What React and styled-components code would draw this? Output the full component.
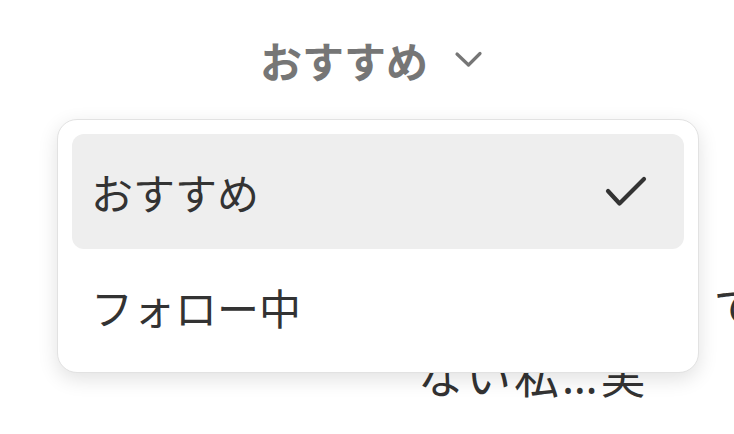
import styled, { createGlobalStyle } from "styled-components";

const GlobalStyle = createGlobalStyle`
  html, body {
    margin: 0;
    padding: 0;
    background: #ffffff;
    overflow: hidden;
  }
  body {
    font-family: "Noto Sans CJK JP", "Noto Sans", sans-serif;
  }
`;

const Page = styled.div`
  position: relative;
  width: 734px;
  height: 434px;
  overflow: hidden;
`;

const Header = styled.div`
  height: 118px;
  padding-left: 10px;
  display: flex;
  align-items: center;
  justify-content: center;
  gap: 26px;
  color: #767676;
  font-size: 42px;
  font-weight: 700;
`;

const Feed = styled.div`
  margin-top: 154px;
  padding-left: 418px;
  color: #333333;
  font-family: "Noto Sans", "Noto Sans CJK JP", sans-serif;
  font-size: 45px;
  line-height: 70px;
`;

const Line = styled.div`
  white-space: nowrap;
  letter-spacing: ${(p) => p.$tracking || 0}px;
`;

const Menu = styled.div`
  position: absolute;
  top: 119px;
  left: 57px;
  width: 612px;
  padding: 14px 14px 8px;
  display: flex;
  flex-direction: column;
  background: #ffffff;
  border: 1px solid #e2e2e2;
  border-radius: 20px;
  box-shadow: 0 6px 20px rgba(0, 0, 0, 0.12);
`;

const Item = styled.div`
  height: 115px;
  padding: 0 36px 0 19px;
  display: flex;
  align-items: center;
  justify-content: space-between;
  border-radius: 12px;
  background: ${(p) => (p.$active ? "#eeeeee" : "transparent")};
  color: #333333;
  font-size: 42px;
`;

const Chevron = () => (
  <svg width="30" height="20" viewBox="0 0 30 20" fill="none">
    <path
      d="M3 5 L14.5 16 L26 4.5"
      stroke="#767676"
      strokeWidth="3.2"
      strokeLinecap="round"
      strokeLinejoin="round"
    />
  </svg>
);

const Check = () => (
  <svg width="44" height="44" viewBox="0 0 44 44" fill="none">
    <path
      d="M4 21 L15.5 33.5 L40 9"
      stroke="#333333"
      strokeWidth="4.2"
      strokeLinecap="round"
      strokeLinejoin="round"
    />
  </svg>
);

export default function App() {
  return (
    <Page>
      <GlobalStyle />
      <Header>
        <span>おすすめ</span>
        <Chevron />
      </Header>
      <Feed>
        <Line>1日「いいね」で</Line>
        <Line $tracking={3}>ない私…実</Line>
      </Feed>
      <Menu>
        <Item $active>
          <span>おすすめ</span>
          <Check />
        </Item>
        <Item>
          <span>フォロー中</span>
        </Item>
      </Menu>
    </Page>
  );
}
